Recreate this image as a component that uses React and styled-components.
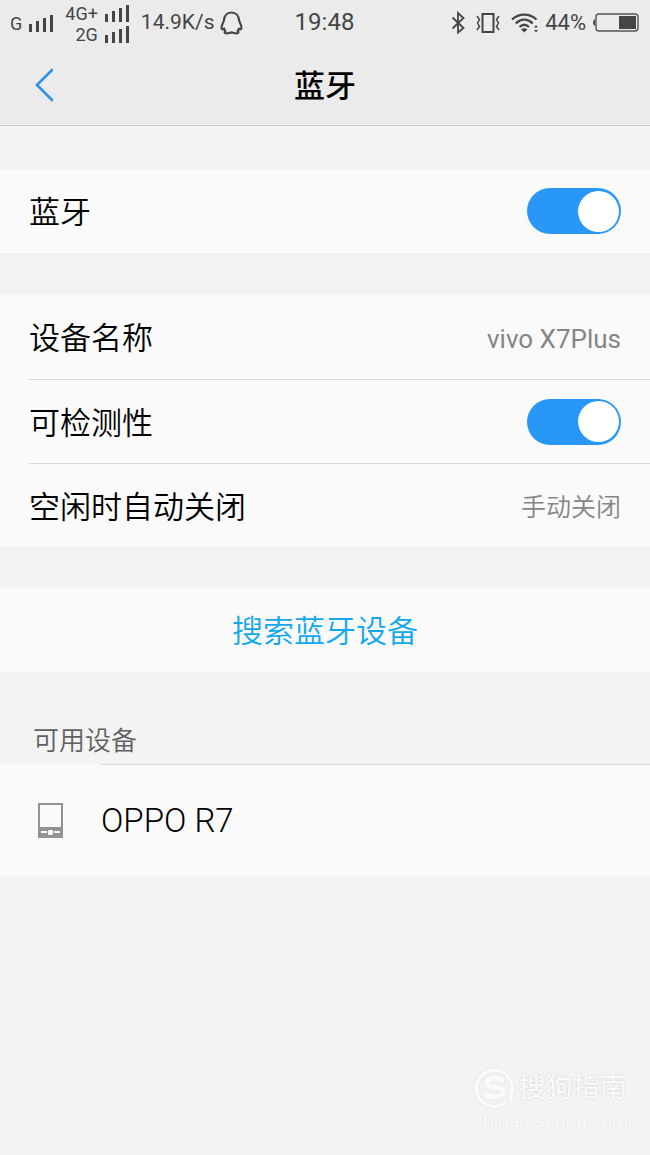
import { useState } from "react";
import styled, { createGlobalStyle } from "styled-components";

export default function App() {
  const [bluetooth, setBluetooth] = useState(true);
  const [visible, setVisible] = useState(true);
  return (
    <Page>
      <GlobalStyle />
      <Top>
        <StatusBar />
        <TitleBar>
          <BackButton type="button" aria-label="返回">
            <svg width="20" height="34" viewBox="0 0 20 34" fill="none">
              <path d="M17 2 L2 17 L17 32" stroke="#3190e8" strokeWidth="2.6" strokeLinecap="round" />
            </svg>
          </BackButton>
          <h1>蓝牙</h1>
        </TitleBar>
      </Top>

      <main>
        <Group>
          <Row>
            <Label as="label" htmlFor="bluetooth">蓝牙</Label>
            <Switch
              id="bluetooth"
              type="checkbox"
              checked={bluetooth}
              onChange={() => setBluetooth(!bluetooth)}
            />
          </Row>
        </Group>

        <Group>
          <RowButton type="button">
            <Label>设备名称</Label>
            <Value $size="26px" $weight="400">vivo X7Plus</Value>
          </RowButton>
          <Row $line>
            <Label as="label" htmlFor="visible">可检测性</Label>
            <Switch
              id="visible"
              type="checkbox"
              checked={visible}
              onChange={() => setVisible(!visible)}
            />
          </Row>
          <RowButton type="button" $line>
            <Label>空闲时自动关闭</Label>
            <Value $size="25px" $weight="350">手动关闭</Value>
          </RowButton>
        </Group>

        <Group>
          <SearchButton type="button">搜索蓝牙设备</SearchButton>
        </Group>

        <SectionTitle>可用设备</SectionTitle>
        <Device type="button">
          <PhoneIcon />
          <span>OPPO R7</span>
        </Device>
      </main>

      <Watermark>
        <div>
          <svg width="42" height="42" viewBox="0 0 42 42" fill="none" stroke="#fbfbfb">
            <path d="M33 34 A18 18 0 1 1 36 30 L38 36" strokeWidth="3" />
            <path d="M30 14 C25 10 13 10 13 16 C13 22 29 19 29 25 C29 31 17 31 11 27" strokeWidth="5" />
          </svg>
          <strong>搜狗指南</strong>
        </div>
        <span>zhinan.sogou.com</span>
      </Watermark>
    </Page>
  );
}

function StatusBar() {
  return (
    <Status>
      <StatusSide>
        <Sims>
          <Network>
            G <Signal />
          </Network>
        </Sims>
        <Sims>
          <Network>
            4G+ <Signal />
          </Network>
          <Network>
            2G <Signal />
          </Network>
        </Sims>
        <Speed>14.9K/s</Speed>
        <QQIcon />
      </StatusSide>
      <Clock>19:48</Clock>
      <StatusSide $end>
        <BluetoothIcon />
        <VibrateIcon />
        <WifiIcon />
        <Percent>44%</Percent>
        <BatteryIcon />
      </StatusSide>
    </Status>
  );
}

function Signal() {
  return (
    <svg width="25" height="17" viewBox="0 0 25 17" fill="#454545">
      <rect x="0" y="9" width="3" height="8" />
      <rect x="7" y="6" width="3" height="11" />
      <rect x="14" y="3" width="3" height="14" />
      <rect x="21" y="0" width="3" height="17" />
    </svg>
  );
}

function QQIcon() {
  return (
    <svg width="23" height="24" viewBox="0 0 23 24" fill="none" stroke="#454545" strokeWidth="2.2" strokeLinejoin="round">
      <path d="M11.5 1.5 C7 1.5 4.3 5 4 9 C3.8 11 1.6 13.5 1.5 16.5 C1.5 18.5 2.5 18.800 4 17.500 C4.300 18.700 4.800 19.300 5.500 20 C4 20.800 4.200 22.400 6.500 22.400 C9 22.400 10 21.500 11.500 21.300 C13 21.500 14 22.400 16.500 22.400 C18.800 22.400 19 20.800 17.500 20 C18.200 19.300 18.700 18.700 19 17.500 C20.500 18.800 21.500 18.500 21.500 16.500 C21.400 13.500 19.200 11 19 9 C18.700 5 16 1.500 11.500 1.500 Z" />
    </svg>
  );
}

function BluetoothIcon() {
  return (
    <svg width="14" height="24" viewBox="0 0 14 24" fill="none" stroke="#454545" strokeWidth="1.8">
      <path d="M1.5 6.5 L12.5 17 L7 21.5 V2 L12.5 7 L1.5 17.5" />
    </svg>
  );
}

function VibrateIcon() {
  return (
    <svg width="24" height="20" viewBox="0 0 24 20" fill="none" stroke="#454545">
      <rect x="6.500" y="1" width="11" height="18" strokeWidth="2" />
      <path d="M1 3 L3.500 6.500 L1.500 10 L3.500 13.500 L1 17 M23 3 L20.500 6.500 L22.500 10 L20.500 13.500 L23 17" strokeWidth="1.500" />
    </svg>
  );
}

function WifiIcon() {
  return (
    <svg width="28" height="20" viewBox="0 0 28 20" fill="none" stroke="#454545" strokeWidth="2.3">
      <path d="M1 6.5 C8 0 18.5 0 25.5 6.5" />
      <path d="M4.8 10.3 C10 5.5 16.5 5.5 21.7 10.3" />
      <path d="M8.5 14 C11.5 11.2 15 11.2 18 14" />
      <path d="M10 16.5 C12 14.8 14.5 14.8 16.5 16.5 L13.3 19.5 Z" fill="#454545" stroke="none" />
      <path d="M23 14.5 L25 12 L27 14.5 Z M23 17 H27 L25 19.5 Z" fill="#454545" stroke="none" />
    </svg>
  );
}

function BatteryIcon() {
  return (
    <svg width="47" height="19" viewBox="0 0 47 19" fill="none">
      <path d="M3 6 C0.5 6.5 0.5 12.5 3 13 Z" fill="#454545" />
      <rect x="4" y="1" width="42" height="17" rx="3" stroke="#555" strokeWidth="1.4" />
      <rect x="27" y="3" width="17" height="13" fill="#454545" />
    </svg>
  );
}

function PhoneIcon() {
  return (
    <svg width="25" height="35" viewBox="0 0 25 35" fill="none">
      <rect x="1" y="1" width="23" height="33" stroke="#929292" strokeWidth="2" />
      <rect x="1" y="24" width="23" height="10" fill="#929292" />
      <path d="M3 29 H9 M16 29 H22" stroke="#fafafa" strokeWidth="2" />
      <rect x="10" y="27" width="5" height="5" rx="1" fill="#fafafa" />
    </svg>
  );
}

const GlobalStyle = createGlobalStyle`
  * {
    box-sizing: border-box;
  }
  body {
    margin: 0;
    background: #f3f3f3;
  }
  button {
    border: none;
    padding: 0;
    background: none;
    font: inherit;
    color: inherit;
    text-align: left;
    cursor: pointer;
  }
  svg {
    display: block;
    flex-shrink: 0;
  }
`;

const Page = styled.div`
  position: relative;
  min-height: 100vh;
  background: #f3f3f3;
  color: #000;
  font-family: Roboto, "Noto Sans CJK SC", sans-serif;
  font-size: 31px;
  font-weight: 350;
  line-height: 36px;
`;

const Top = styled.header`
  background: #ebebeb;
  border-bottom: 1px solid #c8c8c8;
  margin-bottom: 43px;
`;

const Status = styled.div`
  display: grid;
  grid-template-columns: 1fr auto 1fr;
  align-items: center;
  height: 45px;
  padding: 0 11px 0 10px;
  color: #454545;
  font-weight: 400;
  line-height: 21px;
`;

const StatusSide = styled.div`
  display: flex;
  align-items: center;
  justify-content: ${({ $end }) => ($end ? "flex-end" : "flex-start")};
  gap: ${({ $end }) => ($end ? "11px" : "6px")};
`;

const Sims = styled.div`
  padding-top: 2px;

  & + & {
    padding-left: 5px;
    padding-right: 5px;
  }
`;

const Network = styled.div`
  display: flex;
  align-items: center;
  justify-content: flex-end;
  gap: 7px;
  font-size: 18px;
`;

const Speed = styled.span`
  font-size: 21px;
`;

const Clock = styled.time`
  font-size: 24px;
`;

const Percent = styled.span`
  margin: 0 -5px;
  font-size: 22px;
`;

const TitleBar = styled.div`
  display: grid;
  grid-template-columns: 64px 1fr 64px;
  align-items: center;
  height: 80px;

  h1 {
    margin: 0;
    padding-top: 4px;
    font-size: 31px;
    font-weight: 500;
    text-align: center;
  }
`;

const BackButton = styled.button`
  padding-left: 35px;
`;

const Group = styled.section`
  margin-bottom: 42px;
  padding-left: 29px;
  background: #fafafa;

  & + & {
    margin-bottom: 41px;
  }
`;

const Row = styled.div`
  display: flex;
  align-items: center;
  justify-content: space-between;
  width: 100%;
  height: 84px;
  padding-right: 29px;
  border-top: ${({ $line }) => ($line ? "1px solid #d8d8d8" : "none")};
`;

const RowButton = styled(Row).attrs({ as: "button" })``;

const Label = styled.span`
  padding-top: 4px;
`;

const Value = styled.span`
  padding-top: 4px;
  color: #858585;
  font-size: ${({ $size }) => $size};
  font-weight: ${({ $weight }) => $weight};
`;

const Switch = styled.input`
  appearance: none;
  display: flex;
  align-items: center;
  justify-content: ${({ checked }) => (checked ? "flex-end" : "flex-start")};
  width: 94px;
  height: 46px;
  margin: 0;
  padding: 2px;
  border-radius: 23px;
  background: ${({ checked }) => (checked ? "#2997f7" : "#d5d5d5")};
  cursor: pointer;

  &::before {
    content: "";
    width: 41px;
    height: 41px;
    border-radius: 50%;
    background: #fff;
  }
`;

const SearchButton = styled.button`
  width: 100%;
  height: 84px;
  padding: 4px 29px 0 0;
  color: #12a8ee;
  text-align: center;
`;

const SectionTitle = styled.h2`
  margin: 0;
  padding: 10px 33px 5px;
  color: #606060;
  font-size: 26px;
  font-weight: 350;
`;

const Device = styled.button`
  display: flex;
  align-items: center;
  gap: 38px;
  width: 100%;
  height: 112px;
  padding-left: 38px;
  background: #fafafa;

  span {
    flex: 1;
    font-size: 33px;
    font-weight: 300;
    line-height: 112px;
    border-top: 1px solid #d8d8d8;
  }
`;

const Watermark = styled.div`
  position: absolute;
  right: 22px;
  bottom: 22px;
  color: #fbfbfb;
  font-family: "Liberation Sans", "Noto Sans CJK SC", sans-serif;
  font-size: 19px;
  font-weight: 400;
  line-height: 24px;
  text-shadow: 0 0 2px #dcdcdc;

  div {
    display: flex;
    align-items: center;
    gap: 3px;
    filter: drop-shadow(0 0 1px #e4e4e4);
  }
  strong {
    font-size: 27px;
    font-weight: 400;
  }
`;
